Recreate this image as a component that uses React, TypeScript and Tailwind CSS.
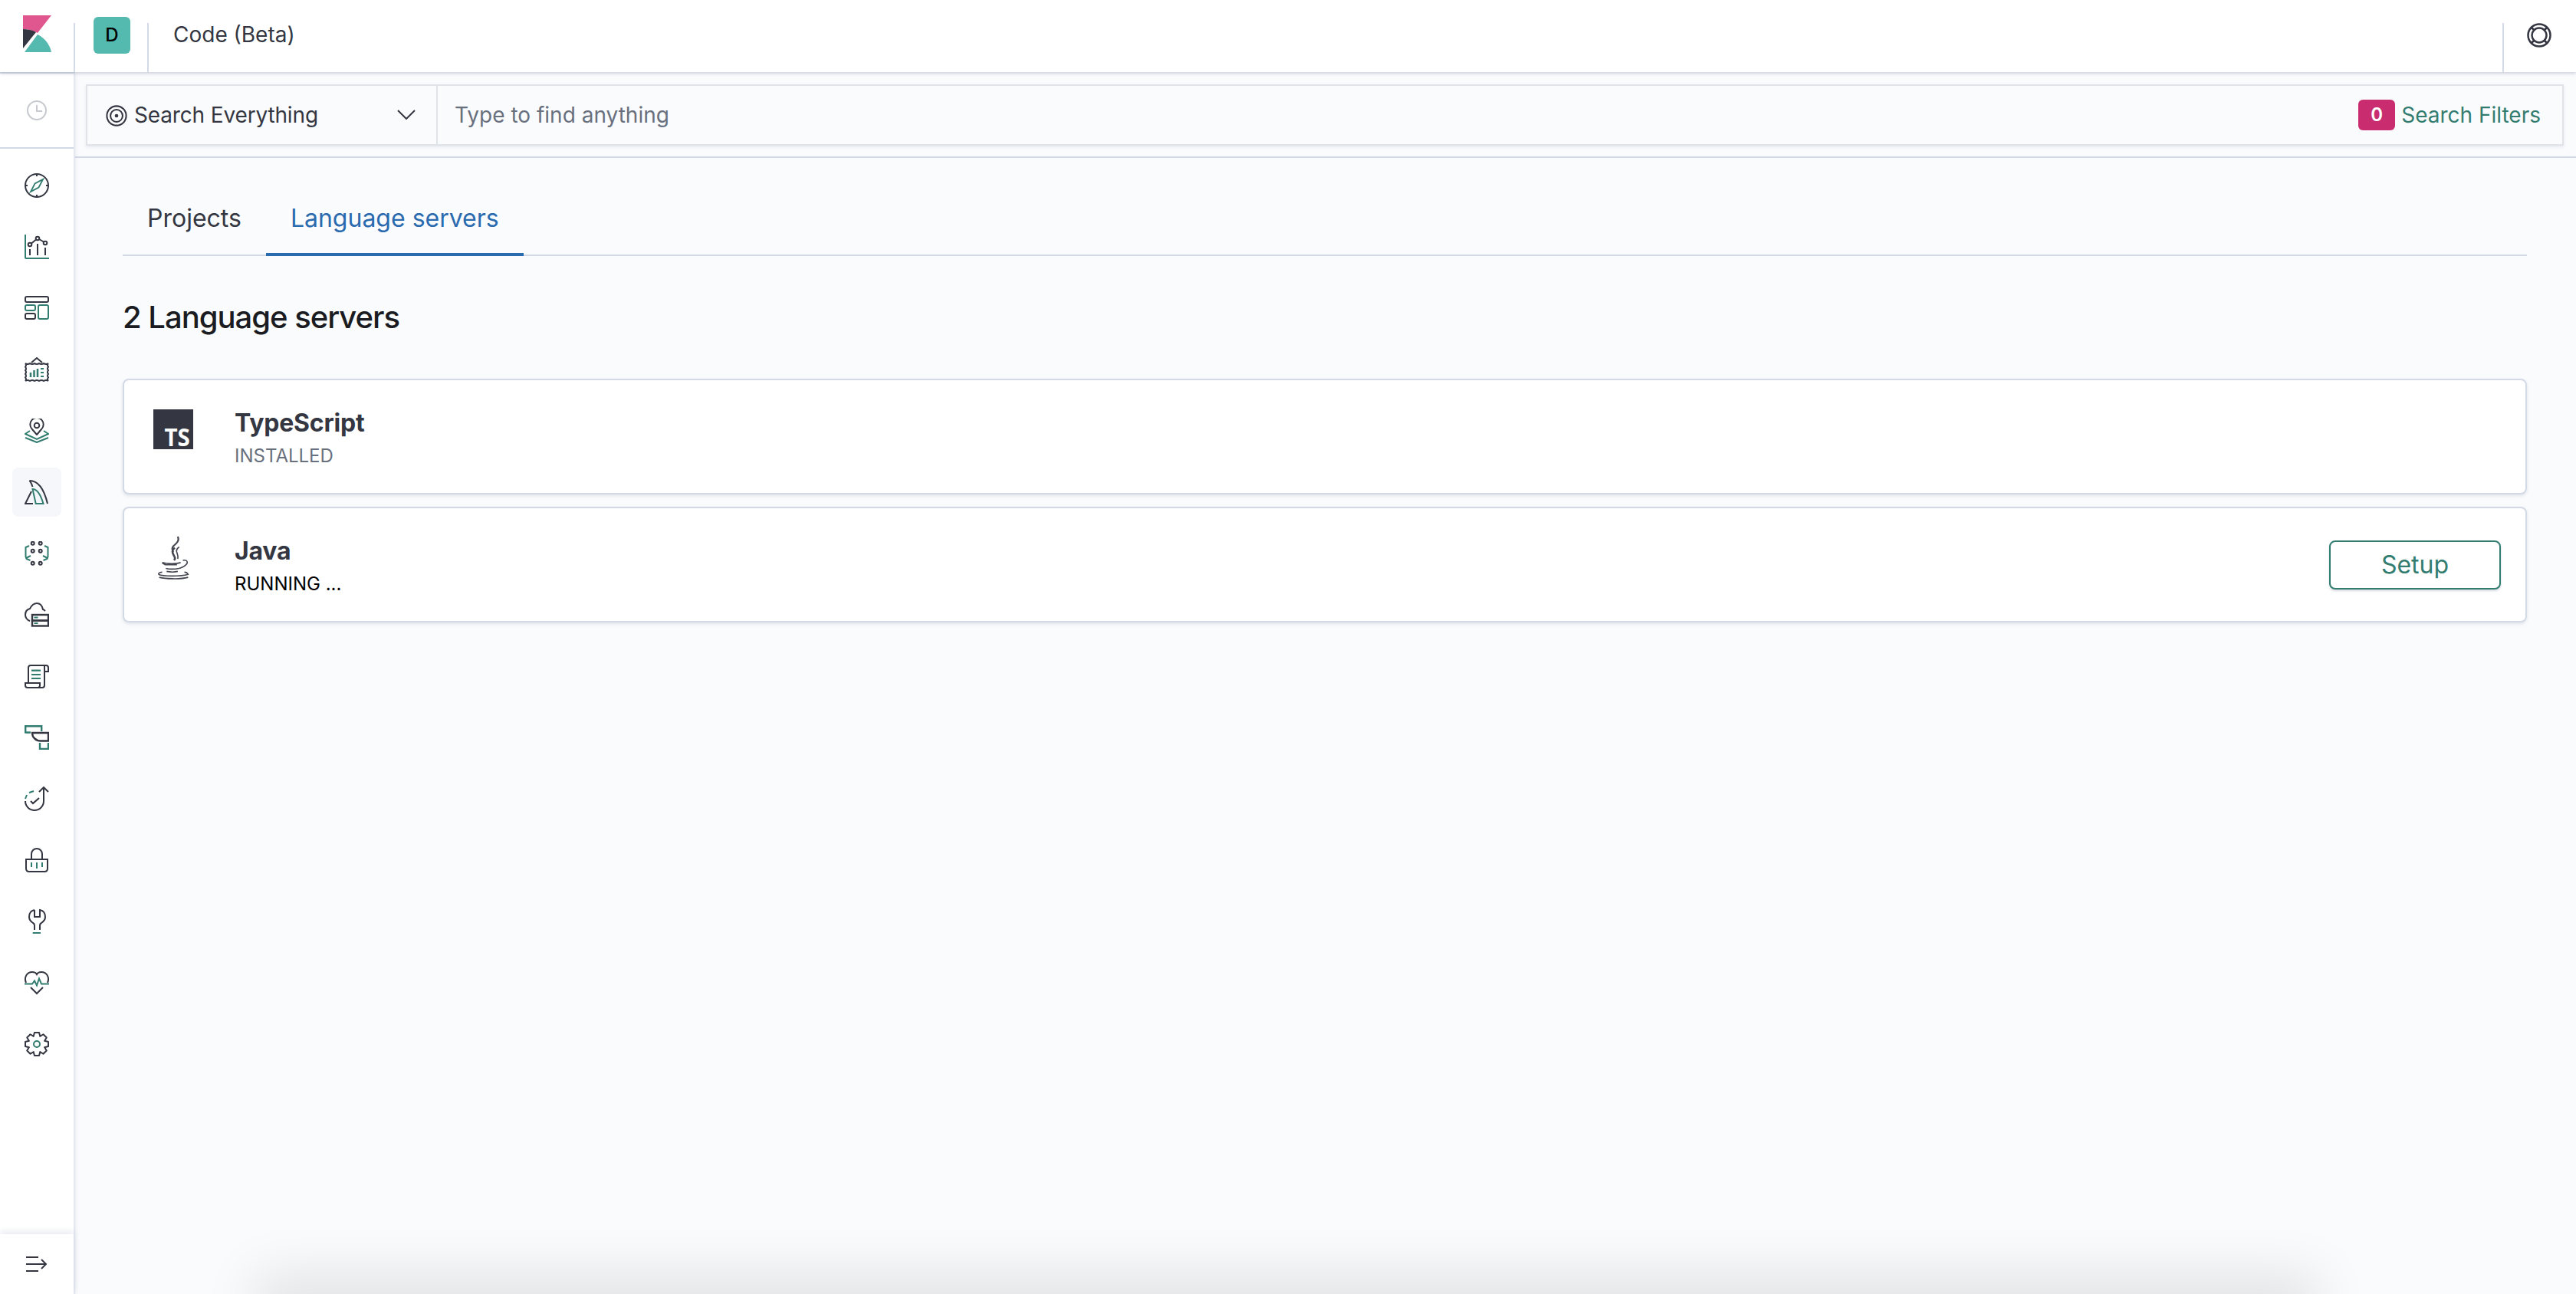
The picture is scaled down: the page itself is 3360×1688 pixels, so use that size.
import React from "react";

const D = "#343741";
const T = "#337d70";

const S = ({ children, size = 32 }: { children: React.ReactNode; size?: number }) => (
  <svg width={size} height={size} viewBox="0 0 32 32" fill="none" strokeWidth={2} className="shrink-0">
    {children}
  </svg>
);

// the outline of the gear, computed from its eight teeth
const gear = (() => {
  const pts: string[] = [];
  const n = 8;
  for (let i = 0; i < n; i++) {
    const a = (i / n) * Math.PI * 2;
    const w = 0.2;
    const g = 0.2;
    const add = (r: number, t: number) =>
      pts.push(`${(16 + r * Math.cos(t)).toFixed(2)},${(16 + r * Math.sin(t)).toFixed(2)}`);
    add(11, a - w - g);
    add(15.3, a - w);
    add(15.3, a + w);
    add(11, a + w + g);
  }
  return pts.join(" ");
})();

const icons: React.ReactNode[] = [
  // compass
  <S key="1">
    <circle cx="16" cy="16" r="15" stroke={D} />
    <path d="M16 1v3M16 28v3M1 16h3M28 16h3" stroke={D} />
    <path d="M24 8 L18.500 18.500 L8 24 L13.500 13.500 Z" stroke={T} strokeWidth="1.800" />
  </S>,
  // visualize
  <S key="2">
    <path d="M1 0v30a1 1 0 0 0 1 1h30" stroke={T} />
    <path d="M9 11.500 L15 6.500 M19 6 L25 9.500" stroke={D} />
    <circle cx="7" cy="13" r="2.300" stroke={D} />
    <circle cx="17" cy="5" r="2.300" stroke={D} />
    <circle cx="27" cy="11" r="2.300" stroke={D} />
    <path d="M7 19v8M17 12v15M27 17v10" stroke={D} />
  </S>,
  // dashboard
  <S key="3">
    <rect x="1" y="1" width="30" height="7" rx="2" stroke={D} />
    <rect x="1" y="12" width="13" height="7" rx="2" stroke={T} />
    <rect x="1" y="23" width="13" height="7" rx="2" stroke={D} />
    <rect x="18" y="12" width="13" height="18" rx="2" stroke={T} />
  </S>,
  // canvas
  <S key="4">
    <path d="M9 7 L16 1 L23 7" stroke={D} />
    <path
      d="M1 8q3 2 6 0q3 2 6 0q3 2 6 0q3 2 6 0q3 2 6 0q-2 2.200 0 4.600q-2 2.200 0 4.600q-2 2.200 0 4.600q-2 2.200 0 4.600q-2 2.200 0 4.600q-3-2-6 0q-3-2-6 0q-3-2-6 0q-3-2-6 0q-3-2-6 0q2-2.200 0-4.600q2-2.200 0-4.600q2-2.200 0-4.600q2-2.200 0-4.600q2-2.200 0-4.600z"
      stroke={D}
    />
    <path d="M8 20v6M12.500 17v9M17 15v11" stroke={T} strokeWidth="2.500" />
    <path d="M21 15h4M21 20h4M21 25h4" stroke={T} strokeWidth="2" />
  </S>,
  // maps
  <S key="5">
    <path d="M16 21 L10 14 A8.700 8.700 0 1 1 22 14 Z" stroke={D} strokeLinejoin="round" />
    <circle cx="16" cy="9" r="3.300" stroke={D} />
    <path d="M7 16 L1 20 L16 27 L31 20 L25 16" stroke={T} />
    <path d="M1 25 L16 31 L31 25" stroke={T} />
  </S>,
  // ml
  <S key="6">
    <path d="M6.500 1c11 0 19 11 23.500 30" stroke={D} />
    <path d="M6.500 1c2 2 3 5 4 8" stroke={D} />
    <path d="M9 15 L1 31h10" stroke={D} />
    <path d="M10.500 12c7 0 11 9 14 19H14.700 L10.500 12z" stroke={T} />
  </S>,
  // graph
  <S key="7">
    <circle cx="10.700" cy="2.700" r="2" stroke={D} />
    <circle cx="20.700" cy="2.700" r="2" stroke={D} />
    <circle cx="10.700" cy="12.700" r="2" stroke={D} />
    <circle cx="20.700" cy="12.700" r="2" stroke={D} />
    <circle cx="10.700" cy="28.700" r="2" stroke={D} />
    <circle cx="20.700" cy="28.700" r="2" stroke={D} />
    <path d="M6 6 L1.500 8v12l1 3 5 2M2 22l6-3" stroke={T} />
    <path d="M26 6 L30.500 8v12l-1 3-5 2M30 22l-6-3" stroke={T} />
  </S>,
  // infra
  <S key="8">
    <path d="M7 24C3 23 1 19 1 16c0-4 2-7 6-8C9 4 12 1 16 1c4 0 7 3 8 8 1 0 2 1 3 2" stroke={D} />
    <rect x="10" y="16" width="21" height="7.500" stroke={D} strokeWidth="2.400" />
    <rect x="10" y="23.500" width="21" height="7" stroke={D} strokeWidth="2.400" />
    <path d="M12.500 19.500h5M12.500 27h5" stroke={T} strokeWidth="2" />
  </S>,
  // logs
  <S key="9">
    <path d="M5 24V5a3 3 0 0 1 3-3h20a3 3 0 0 1 3 3v5h-5V3" stroke={D} />
    <path d="M26 3v25a3 3 0 0 1-3 3H4a3 3 0 0 1-3-3v-3h19v3a3 3 0 0 1-2 3" stroke={D} />
    <path d="M9 8.700h12M9 14h12M9 19h12" stroke={T} strokeWidth="2.200" />
  </S>,
  // apm
  <S key="10">
    <path d="M1.200 10.500V1.200h21V8M1 9.500h7" stroke={T} strokeWidth="2.400" />
    <path d="M10 10h21v10.500H21C15 20.500 10 16 10 10z" stroke={D} strokeWidth="2.400" />
    <path d="M20 23v8h11v-8" stroke={T} strokeWidth="2.400" />
  </S>,
  // uptime
  <S key="11">
    <path d="M19 7 L25 1 L31 7" stroke={D} />
    <path d="M25 1v18a12 12 0 0 1-24 0" stroke={D} />
    <path d="M8 19 L11 22 L19 15" stroke={D} strokeWidth="2.200" />
    <path d="M1 16l2-5M6 8l6-2" stroke={T} strokeWidth="2" />
  </S>,
  // security
  <S key="12">
    <path d="M9 15V8a7 7 0 0 1 14 0v7" stroke={D} />
    <path d="M2 15h28v12q0 4-4 4H6q-4 0-4-4z" stroke={D} />
    <path d="M9 19v6M16 19v8M23 19v6" stroke={T} strokeWidth="2" />
  </S>,
  // dev tools
  <S key="13">
    <path
      d="M13 1C8 2 6 6 6 10c0 4 2 6 5 8q2 1 2 3v6M13 1v9h7V1C25 2 27 6 27 10c0 4-2 6-5 8q-2 1-2 3v6"
      stroke={D}
    />
    <path d="M10.700 31h10.300" stroke={T} strokeWidth="2" />
  </S>,
  // monitoring
  <S key="14">
    <path d="M2 16C-1 9 3 2 10 2c3 0 5 1 6 3 1-2 3-3 6-3 7 0 11 7 8 14" stroke={D} />
    <path d="M0 17.500h10l3-4 3 6 3-9 3 7h10" stroke={T} />
    <path d="M8 22l8 8 8-8" stroke={D} />
  </S>,
  // management
  <S key="15">
    <polygon points={gear} stroke={D} strokeLinejoin="round" />
    <circle cx="16" cy="16" r="4" stroke={T} />
  </S>,
];

function Sidebar() {
  return (
    <aside className="relative z-10 w-[98px] shrink-0 flex flex-col bg-white border-r-2 border-t-2 border-r-[#e4e7ef] border-t-[#d3dae6] shadow-[2px_0_4px_rgba(152,162,179,0.12)]">
      <div className="h-[98px] shrink-0 flex items-center justify-center border-b-2 border-[#d3dae6]">
        <svg width="26" height="26" viewBox="0 0 26 26" fill="none" stroke="#c6c9ce" strokeWidth="2">
          <circle cx="13" cy="13" r="12" />
          <path d="M13 6v8h7" />
        </svg>
      </div>
      <nav className="flex flex-col items-center pt-[12px] gap-[8px]">
        {icons.map((ic, i) =>
          i === 5 ? (
            <div key={i} className="w-[64px] h-[64px] my-[4px] bg-[#f5f7fa] rounded-[8px] flex items-center justify-center">
              {ic}
            </div>
          ) : (
            <div key={i} className="w-[64px] h-[72px] flex items-center justify-center">
              {ic}
            </div>
          )
        )}
      </nav>
      <div className="mt-auto h-[78px] shrink-0 flex items-center justify-center bg-white shadow-[0_-4px_8px_rgba(152,162,179,0.2)]">
        <svg width="28" height="20" viewBox="0 0 28 20" fill="none" stroke={D} strokeWidth="2">
          <path d="M0 1h16M0 10h26M0 19h16M20 4l6 6-6 6" />
        </svg>
      </div>
    </aside>
  );
}

function Card({
  icon,
  title,
  status,
  statusClass,
  action,
}: {
  icon: React.ReactNode;
  title: string;
  status: string;
  statusClass: string;
  action?: React.ReactNode;
}) {
  return (
    <div className="h-[151px] bg-white border-2 border-[#d3dae6] rounded-[8px] shadow-[0_2px_4px_rgba(152,162,179,0.25)] flex items-center pl-[38px] pr-[32px]">
      <div className="w-[106px] shrink-0 self-start pt-[38px]">{icon}</div>
      <div className="flex flex-col self-start pt-[32px]">
        <div className="text-[32px] leading-[48px] font-bold text-[#343741] tracking-[-0.2px]">{title}</div>
        <div className={`text-[24px] leading-[36px] mt-[1px] ${statusClass}`}>{status}</div>
      </div>
      <div className="ml-auto">{action}</div>
    </div>
  );
}

export default function App() {
  return (
    <div className="w-[3360px] h-[1688px] flex flex-col overflow-hidden bg-[#fafbfd] font-['Inter','Liberation_Sans',sans-serif] text-[#343741]">
      <header className="relative z-20 h-[94px] shrink-0 bg-white flex shadow-[0_2px_4px_rgba(152,162,179,0.45)]">
        <div className="w-[96px] pt-[20px] pl-[30px] shrink-0">
          <svg width="38" height="48" viewBox="0 0 38 48">
            <path d="M0 0h37L19 23C14 20 6 18 0 18z" fill="#e0568f" />
            <path d="M0 18C6 18 12 19 17 22L0 43z" fill="#343741" />
            <path d="M2 48L19 25C28 29 35 38 37 48z" fill="#54b9ae" />
          </svg>
        </div>
        <div className="w-[96px] mt-[30px] border-l-2 border-[#d3dae6] shrink-0 relative">
          <div className="absolute left-[24px] top-[-8px] w-[48px] h-[48px] bg-[#54b9ae] rounded-[6px] flex items-center justify-center text-[24px] font-medium text-black">
            D
          </div>
        </div>
        <div className="flex-1 mt-[30px] border-l-2 border-[#d3dae6] pl-[32px]">
          <div className="text-[28px] leading-[32px] mt-[-1px]">Code (Beta)</div>
        </div>
        <div className="w-[96px] mt-[30px] border-l-2 border-[#d3dae6] shrink-0 relative">
          <svg className="absolute left-[30px] top-0" width="32" height="32" viewBox="0 0 32 32" fill="none" stroke={D} strokeWidth="2.500">
            <circle cx="16" cy="16" r="14.500" />
            <circle cx="16" cy="16" r="9.500" />
            <path d="M6 6l4 4M26 6l-4 4M6 26l4-4M26 26l-4-4" />
          </svg>
        </div>
      </header>

      <div className="flex-1 flex min-h-0 relative">
        <Sidebar />
        <main className="flex-1 min-w-0 relative">
          <div className="h-[112px] pt-[16px] pl-[14px] pr-[16px] border-b-2 border-[#d3dae6]">
            <div className="h-[80px] flex border-2 border-[#e0e3e8] shadow-[0_2px_4px_rgba(152,162,179,0.2)] bg-[#fafbfd]">
              <div className="w-[457px] shrink-0 flex items-center pl-[24px] pr-[27px] border-r-2 border-[#e0e3e8] text-[28px]">
                <svg width="28" height="28" viewBox="0 0 30 30" fill="none" stroke={D} strokeWidth="2.200" className="mr-[9px] mt-[2px] shrink-0">
                  <circle cx="15" cy="15" r="13.500" />
                  <circle cx="15" cy="15" r="8.500" />
                  <circle cx="15" cy="15" r="2.500" fill={D} stroke="none" />
                </svg>
                <span className="tracking-[-0.15px]">Search Everything</span>
                <svg className="ml-auto mt-[-2px]" width="24" height="13" viewBox="0 0 24 13" fill="none" stroke={D} strokeWidth="2">
                  <path d="M1 1l11 11L23 1" />
                </svg>
              </div>
              <div className="flex-1 flex items-center pl-[22px] pr-[28px] text-[28px]">
                <span className="text-[#69707d]">Type to find anything</span>
                <span className="ml-auto w-[48px] h-[40px] rounded-[6px] bg-[#c92d70] text-white text-[24px] font-semibold flex items-center justify-center">0</span>
                <span className="ml-[8px] text-[#337d70]">Search Filters</span>
              </div>
            </div>
          </div>

          <div className="pl-[62px] pr-[64px]">
            <div className="h-[128px] flex items-end border-b-2 border-[#d3dae6]">
              <div className="h-[71px] px-[32px] text-[32px] leading-[48px] text-[#343741]">Projects</div>
              <div className="h-[73px] px-[32px] text-[32px] leading-[48px] text-[#2a6aaf] border-b-4 border-[#2a6aaf] mb-[-2px]">
                Language servers
              </div>
            </div>
            <h2 className="text-[40px] leading-[48px] font-medium text-[#1a1c21] tracking-[-1px] mt-[56px] mb-[56px]">2 Language servers</h2>
            <div className="flex flex-col gap-[16px]">
              <Card
                title="TypeScript"
                status="INSTALLED"
                statusClass="text-[#69707d]"
                icon={
                  <div className="relative w-[52px] h-[52px] bg-[#343741]">
                    <span className="absolute right-[3px] bottom-[-2px] text-white text-[32px] leading-[36px] font-bold font-['Open_Sans',sans-serif] scale-x-[0.92]">TS</span>
                  </div>
                }
              />
              <Card
                title="Java"
                status="RUNNING ..."
                statusClass="text-black"
                icon={
                  <svg width="44" height="58" viewBox="0 0 44 60" fill="none" stroke="#43464f" strokeWidth="1.700" className="ml-[5px] mt-[-2px]">
                    <path d="M27 1c3 6-2 9-6 13-3 3-1 6 0 8" strokeWidth="2.200" />
                    <path d="M23 16c-5 4-3 7-1 11 2 3 1 5 0 6" strokeWidth="2.700" />
                    <path d="M29 15c-3 2-5 4-3 8 1 3 2 5 1 8" strokeWidth="1.700" />
                    <path d="M6 36c6 2 20 2 25 0M6 36c2 2 3 2 4 3h16M11 44c4 1 12 1 18 0M12 48c5 1 11 1 15 0" />
                    <path d="M34 33c6-1 8 3 3 7-2 2-5 3-8 4" />
                    <path d="M1 52c6 3 30 3 40 0-1-2-3-3-5-3M1 52c0-2 3-3 5-3M2 56c8 2 28 3 39 0" />
                  </svg>
                }
                action={
                  <button className="block w-[224px] h-[64px] border-2 border-[#337d70] rounded-[8px] text-[32px] text-[#337d70] bg-white shadow-[0_2px_3px_rgba(152,162,179,0.4)]">
                    Setup
                  </button>
                }
              />
            </div>
          </div>

          <div className="absolute left-[260px] bottom-[-28px] w-[2640px] h-[28px] shadow-[0_0_70px_25px_rgba(0,0,0,0.1)]" />
        </main>
      </div>
    </div>
  );
}
